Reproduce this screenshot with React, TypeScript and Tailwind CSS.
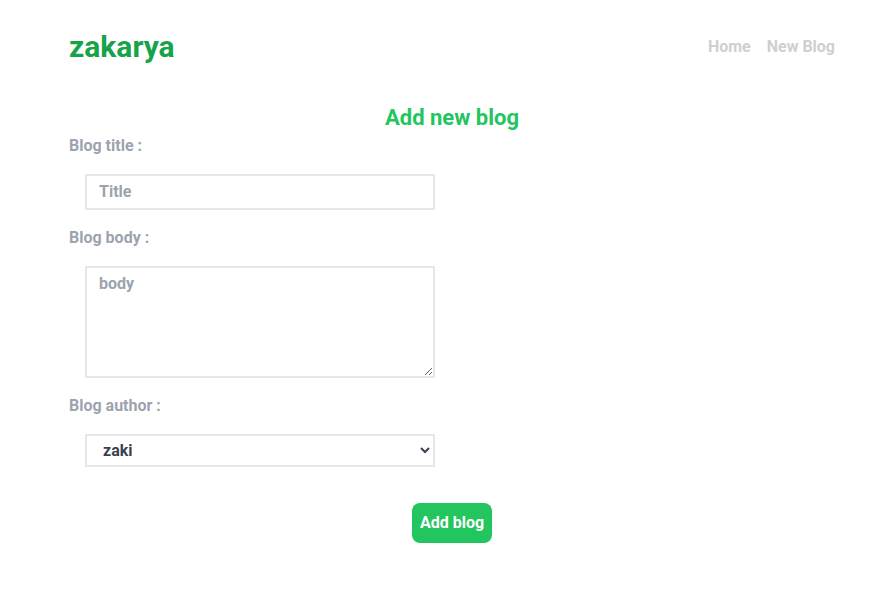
export default function App() {
  return (
    <div className="min-h-screen bg-white font-['Roboto',sans-serif] pl-[69px] pr-[52px]">
      <nav className="flex items-center justify-between pt-[29px]">
        <h1 className="text-3xl font-bold text-[#16a34a]">zakarya</h1>
        <div className="flex gap-4 text-base font-bold text-[#cfcfcf]">
          <a href="#">Home</a>
          <a href="#">New Blog</a>
        </div>
      </nav>

      <div className="mt-[39px]">
        <h2 className="text-center text-[22px] leading-7 font-bold text-[#22c55e]">Add new blog</h2>
        <form className="font-bold text-base">
          <label className="block text-[#9ca3af] mt-[2px]">Blog title :</label>
          <input
            type="text"
            placeholder="Title"
            className="block ml-4 mt-4 w-[350px] border-2 border-[#e5e7eb] px-3 py-1 placeholder:text-[#9ca3af] outline-none"
          />
          <label className="block text-[#9ca3af] mt-4">Blog body :</label>
          <textarea
            placeholder="body"
            className="block ml-4 mt-4 w-[350px] h-[112px] border-2 border-[#e5e7eb] px-3 py-1 placeholder:text-[#9ca3af] outline-none"
          />
          <label className="block text-[#9ca3af] mt-4">Blog author :</label>
          <select className="block ml-4 mt-4 w-[350px] h-[33px] border-2 border-[#e5e7eb] px-3 text-[#374151] outline-none">
            <option>zaki</option>
            <option>yoshi</option>
          </select>
          <div className="flex justify-center mt-9">
            <button
              type="button"
              className="bg-[#22c55e] text-white rounded-lg px-2 py-2"
            >
              Add blog
            </button>
          </div>
        </form>
      </div>
    </div>
  );
}
